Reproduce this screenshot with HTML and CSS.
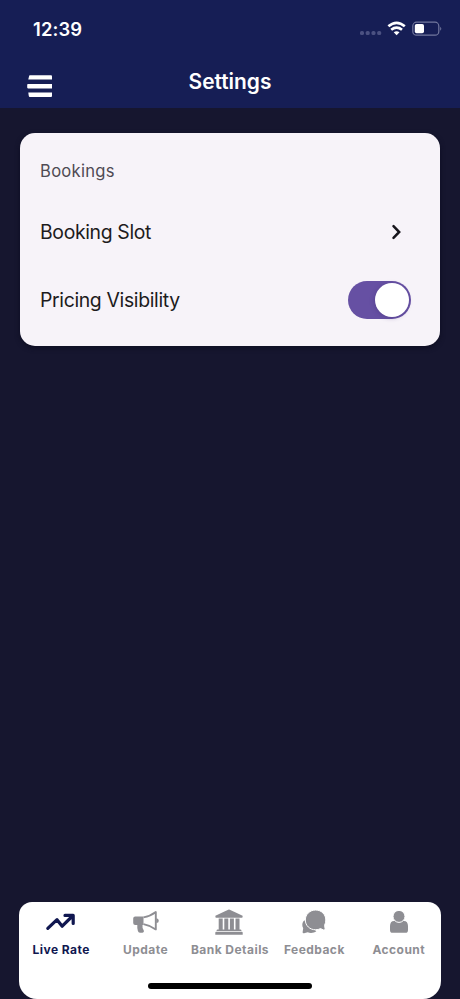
FILE: index.html
```
<!DOCTYPE html>
<html lang="en">
<head>
<meta charset="utf-8">
<title>Settings</title>
<link rel="stylesheet" href="styles.css">
</head>
<body>
<div class="screen">
  <header class="header">
    <div class="status">
      <span class="time">12:39</span>
      <svg class="indicators" width="84" height="20" viewBox="0 0 84 20">
        <g fill="#4b5181"><rect x="2" y="13" width="4" height="4" rx="1.6"/><rect x="7.7" y="13" width="4" height="4" rx="1.6"/><rect x="13.5" y="13" width="4" height="4" rx="1.6"/><rect x="19.2" y="13" width="4" height="4" rx="1.6"/></g>
        <g fill="none" stroke="#fff" stroke-width="2.7"><path d="M30.4 8.3Q38.6 1.4 46.8 8.3"/><path d="M33.2 11.7Q38.6 7.4 44 11.7"/></g>
        <path d="M35.7 14.3Q38.6 12 41.5 14.3L38.6 17.2Z" fill="#fff"/>
        <rect x="54.8" y="4.2" width="26" height="13" rx="3.8" fill="none" stroke="#73789e" stroke-width="1.2"/>
        <rect x="56.8" y="6" width="9.2" height="9.3" rx="1.8" fill="#fff"/>
        <path d="M82.2 8.8Q84.4 10.8 82.2 12.8Z" fill="#73789e"/>
      </svg>
    </div>
    <div class="titlebar">
      <svg class="menu" width="26" height="24" viewBox="0 0 26 24" fill="#fff">
        <path d="M2.8 1.2H24q1 0 1 1v3.2H1.3L2.1 2Q2.3 1.2 2.8 1.2Z"/><path d="M1 10H25V14.4H1q-.8 0-.8-.8v-2.8q0-.8.8-.8Z"/><path d="M1.3 18.6H25v3.3q0 1-1 1H2.7q-.7 0-.9-.9Z"/>
      </svg>
      <h1>Settings</h1>
    </div>
  </header>
  <main class="content">
    <section class="card">
      <h2>Bookings</h2>
      <div class="row">
        <span class="slot">Booking Slot</span>
        <svg class="chevron" width="12" height="18" viewBox="0 0 12 18"><path d="M2.5 3.2L8.2 9L2.5 14.8" fill="none" stroke="#17151c" stroke-width="2.5" stroke-linecap="round" stroke-linejoin="miter"/></svg>
      </div>
      <div class="row">
        <span class="pricing">Pricing Visibility</span>
        <span class="switch"><span class="thumb"></span></span>
      </div>
    </section>
  </main>
  <nav class="tabs">
    <div class="tab active">
      <svg width="32" height="28" viewBox="0 0 32 28"><path d="M2.8 19.4L12 10.7L17.2 17.2L28 6.5M20 6.4H28.2V14.5" fill="none" stroke="currentColor" stroke-width="3.2" stroke-linecap="round" stroke-linejoin="round"/></svg>
      <span>Live Rate</span>
    </div>
    <div class="tab">
      <svg width="32" height="28" viewBox="0 0 32 28"><path d="M5.2 7.5H13.5V16.1H12.5Q12 19 13.8 21.5Q14.5 23.6 12.5 23.8H10Q8.3 23.8 7.9 22Q7 19 7.3 16.1H5.2Q3.2 16 3.2 14.1V9.5Q3.2 7.5 5.2 7.5Z" fill="currentColor"/><path d="M13.5 8.4Q20.5 7.2 25.8 3.1V20.4Q20.5 16.4 13.5 15.1" fill="none" stroke="currentColor" stroke-width="1.9" stroke-linejoin="round"/><path d="M26.3 9.3Q28.8 9.4 28.8 11.7Q28.8 13.9 26.3 14.1Z" fill="currentColor"/></svg>
      <span>Update</span>
    </div>
    <div class="tab">
      <svg width="32" height="28" viewBox="0 0 32 28" fill="currentColor"><path d="M1.4 6.7L14.2 .7Q15 .4 15.8 .7L28.6 6.7V8Q28.6 8.7 27.8 8.7H2.2Q1.4 8.7 1.4 8Z"/><path d="M4.7 9.4H8.7V21H4.7ZM10.3 9.4H14.3V21H10.3ZM15.9 9.4H19.9V21H15.9ZM21.5 9.4H25.5V21H21.5Z"/><path d="M3.6 20.5H26.4Q27.2 20.5 27.4 21.3V22H2.6V21.3Q2.8 20.5 3.6 20.5ZM2.2 22.8H27.8Q28.7 22.8 28.7 23.7V25.8H1.3V23.7Q1.3 22.8 2.2 22.8Z"/></svg>
      <span>Bank Details</span>
    </div>
    <div class="tab">
      <svg width="32" height="28" viewBox="0 0 32 28"><path d="M6.3 11.3C4 13.2 3.7 16.8 5.2 19.3L4.6 23.2Q4.7 24.6 6.1 24.2L9.7 23.3C12.5 24.4 16 24 18.3 22.2L6.3 11.3Z" fill="currentColor"/><path d="M17.7 1C11.9 1 7.3 5.4 7.3 11C7.3 16.6 11.9 20.8 17.5 20.8C19.3 20.8 21.1 20.4 22.5 19.6L25.4 20.9Q27 21.3 27.1 19.9L26.6 16.2C27.4 14.7 27.8 12.9 27.8 11C27.8 5.4 23.4 1 17.7 1Z" fill="currentColor" stroke="#fff" stroke-width="1"/></svg>
      <span>Feedback</span>
    </div>
    <div class="tab">
      <svg width="32" height="28" viewBox="0 0 32 28" fill="currentColor"><path d="M11.5 11.9Q7.1 11.6 7 17V20.9Q7 23.8 9.6 23.8H22.4Q25 23.8 25 20.9V17Q24.9 11.6 20.5 11.9Z"/><circle cx="16" cy="7.4" r="6" stroke="#fff" stroke-width="1"/></svg>
      <span>Account</span>
    </div>
    <div class="home"></div>
  </nav>
</div>
</body>
</html>
```
FILE: styles.css
```
* { box-sizing: border-box; }
body { margin: 0; background: #16162f; font-family: Inter, "Liberation Sans", sans-serif; }
.screen { height: 999px; display: flex; flex-direction: column; overflow: hidden; }
.header { height: 108px; background: #161e55; color: #fff; }
.status { height: 56px; padding: 18px 18px 0 33px; display: flex; justify-content: space-between; }
.time { font-size: 18.4px; line-height: 22px; font-weight: 600; letter-spacing: .1px; }
.titlebar { height: 52px; display: grid; grid-template-columns: 1fr auto 1fr; padding: 0 27px; }
.menu { margin-top: 18px; }
h1 { margin: 13px 0 0; font-size: 20.9px; line-height: 26px; font-weight: 600; }
.content { flex: 1; padding: 25px 20px; }
.card { height: 213px; padding: 27px 29px 0 20px; border-radius: 15px; background: #f7f3f9; box-shadow: 0 2px 5px #0e0e22; color: #1d1b20; }
h2 { margin: 0; font-size: 16.6px; line-height: 23px; font-weight: 400; letter-spacing: .28px; color: #504b54; }
.row { height: 68px; display: flex; align-items: center; justify-content: space-between; font-size: 19.4px; letter-spacing: -.34px; }
h2 + .row { margin-top: 15px; }
.chevron { margin-right: 8px; }
.switch { width: 63px; height: 38px; border-radius: 19px; padding: 2px; display: flex; justify-content: flex-end; background: #6650a3; }
.thumb { width: 34px; height: 34px; border-radius: 50%; background: #fff; box-shadow: -1px 1px 4px #49357c66; }
.tabs { height: 97px; margin: 0 19px; padding-top: 7px; border-radius: 13px 13px 18px 18px; background: #fff; display: grid; grid-template-columns: repeat(5, 84.4px); grid-template-rows: 74px auto; }
.tab { display: flex; flex-direction: column; align-items: center; color: #8e8e93; font-size: 12px; line-height: 16px; font-weight: 700; letter-spacing: .46px; white-space: nowrap; }
.tab span { margin-top: 5px; }
.active { color: #101750; }
.home { grid-column: 1 / -1; justify-self: center; width: 164px; height: 6px; border-radius: 3px; background: #000; }
```
